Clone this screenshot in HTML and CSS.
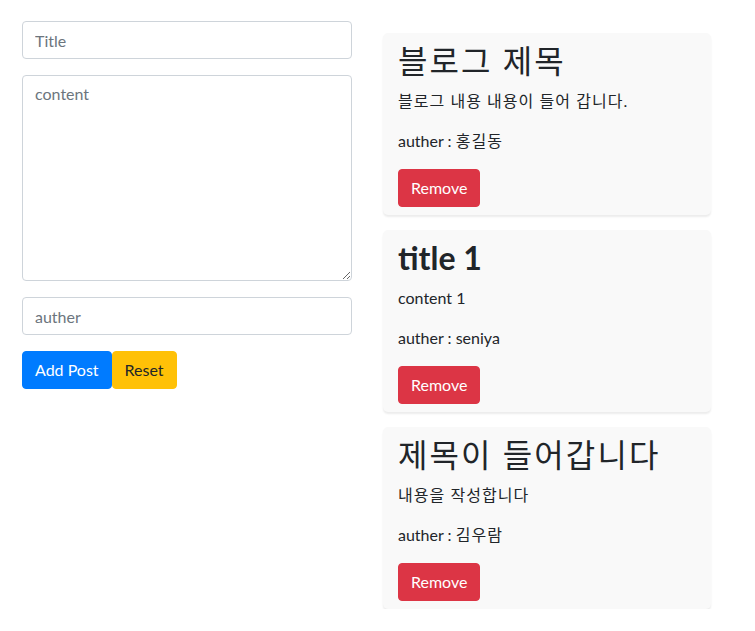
FILE: index.html
```html
<!DOCTYPE html>
<html lang="ko">
<head>
<meta charset="utf-8">
<title>Blog</title>
<link rel="stylesheet" href="styles.css">
</head>
<body>
<div class="app">
  <form class="editor">
    <input class="field" type="text" placeholder="Title">
    <textarea class="field area" placeholder="content"></textarea>
    <input class="field" type="text" placeholder="auther">
    <div class="actions">
      <button type="button" class="btn btn-primary">Add Post</button>
      <button type="button" class="btn btn-warning">Reset</button>
    </div>
  </form>
  <div class="posts">
    <div class="card">
      <h2 class="card-title ko">블로그 제목</h2>
      <p class="card-text ko">블로그 내용 내용이 들어 갑니다.</p>
      <p class="card-text">auther : <span class="ko">홍길동</span></p>
      <button type="button" class="btn btn-danger">Remove</button>
    </div>
    <div class="card">
      <h2 class="card-title bold">title 1</h2>
      <p class="card-text">content 1</p>
      <p class="card-text">auther : seniya</p>
      <button type="button" class="btn btn-danger">Remove</button>
    </div>
    <div class="card">
      <h2 class="card-title ko">제목이 들어갑니다</h2>
      <p class="card-text ko">내용을 작성합니다</p>
      <p class="card-text">auther : <span class="ko">김우람</span></p>
      <button type="button" class="btn btn-danger">Remove</button>
    </div>
  </div>
</div>
</body>
</html>
```

FILE: styles.css
```css
* { box-sizing: border-box; }
html, body { margin: 0; padding: 0; background: #fff; }
body {
  font-family: Lato, "Noto Sans CJK KR", sans-serif;
  font-size: 16px;
  line-height: 1.5;
  color: #212529;
}
.ko { letter-spacing: 0.065em; }
.app {
  display: flex;
  align-items: flex-start;
  gap: 31px;
  padding: 21px 0 0 22px;
}
.editor {
  width: 330px;
  display: flex;
  flex-direction: column;
  gap: 16px;
  margin: 0;
}
.field {
  display: block;
  width: 100%;
  height: 38px;
  padding: 6px 12px;
  font: inherit;
  line-height: 24px;
  color: #495057;
  background: #fff;
  border: 1px solid #ced4da;
  border-radius: 4px;
  outline: none;
}
.field::placeholder { color: #6c757d; opacity: 1; }
.area { height: 206px; resize: vertical; }
.actions { display: flex; }
.btn {
  display: inline-block;
  height: 38px;
  padding: 6px 12px;
  font: inherit;
  line-height: 24px;
  border: 1px solid transparent;
  border-radius: 4px;
  cursor: pointer;
}
.btn-primary { background: #007bff; border-color: #007bff; color: #fff; }
.btn-warning { background: #ffc107; border-color: #ffc107; color: #212529; }
.btn-danger { background: #dc3545; border-color: #dc3545; color: #fff; }
.posts {
  width: 328px;
  margin-top: 12px;
  display: flex;
  flex-direction: column;
  gap: 15px;
}
.card {
  background: #f9f9f9;
  border-radius: 5px;
  padding: 8px 15px;
  box-shadow: 0 2px 2px rgba(0, 0, 0, 0.08);
}
.card-title {
  margin: 0 0 8px;
  font-size: 32px;
  font-weight: 400;
  line-height: 40px;
}
.card-title.bold { font-weight: 700; }
.card-text { margin: 0 0 16px; line-height: 24px; }
```
